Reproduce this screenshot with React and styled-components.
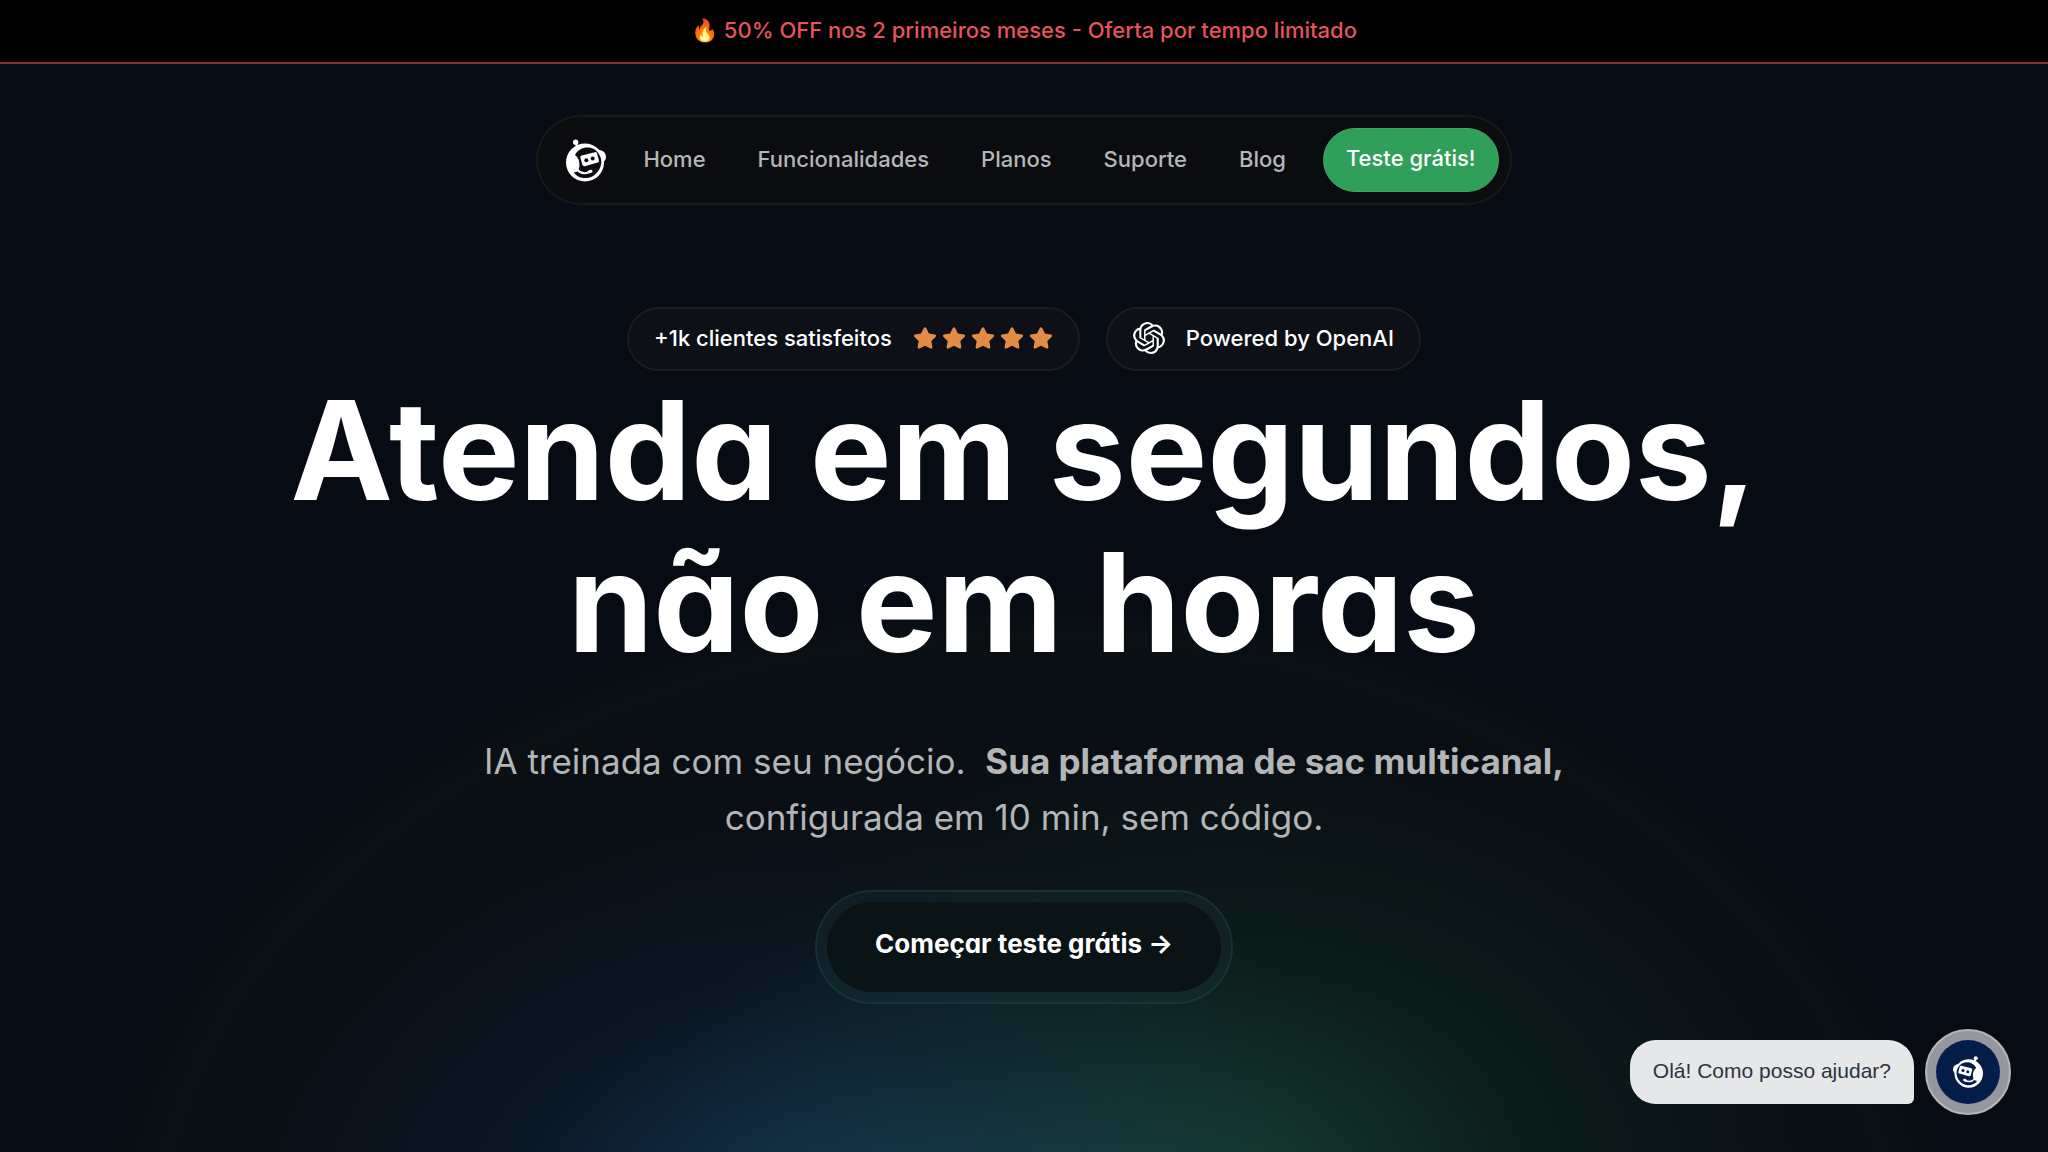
import React from "react";
import styled, { createGlobalStyle } from "styled-components";
import { FaStar } from "react-icons/fa";
import { SiOpenai } from "react-icons/si";

const GlobalStyle = createGlobalStyle`
  * {
    box-sizing: border-box;
  }
  body {
    margin: 0;
    background: #070c14;
    color: #fff;
    font-family: Inter, "Liberation Sans", sans-serif;
  }
`;

const Page = styled("div")`
  display: flex;
  flex-direction: column;
  min-height: 100vh;
  background:
    radial-gradient(ellipse 24% 26% at 50% 106%, rgba(30, 92, 100, 0.4), rgba(30, 92, 100, 0.15) 55%, transparent),
    radial-gradient(ellipse 27% 36% at 38% 107%, rgba(22, 68, 128, 0.48), rgba(20, 52, 100, 0.2) 50%, transparent),
    radial-gradient(ellipse 29% 38% at 61% 102%, rgba(28, 92, 56, 0.42), rgba(22, 70, 46, 0.2) 50%, transparent),
    radial-gradient(ellipse 45% 58% at 50% 110%, rgba(14, 24, 27, 0.7), rgba(11, 16, 20, 0.5) 88%, rgba(12, 18, 20, 0.65) 95%, transparent),
    #070c14;
`;

const Banner = styled("div")`
  display: flex;
  justify-content: center;
  padding: 16px 24px 18px;
  border-bottom: 2px solid #87303a;
  background: #000;
  color: #e5535c;
  font-size: 22px;
  font-weight: 500;
  line-height: 28px;
`;

const Nav = styled("nav")`
  display: flex;
  align-items: center;
  align-self: center;
  margin-top: 51px;
  padding: 11px 11px 11px 28px;
  border: 2px solid #15191c;
  border-radius: 45px;
  background: #0b0c0f;
`;

const LogoLink = styled("a")`
  display: flex;
  margin-right: 11px;
  color: #fff;
`;

const NavLink = styled("a")`
  padding: 0 26px 2px;
  color: #b5b6b7;
  font-size: 22px;
  font-weight: 500;
  line-height: 28px;
  text-decoration: none;
`;

const Trial = styled("a")`
  margin-left: 11px;
  padding: 15px 22px 19px;
  border: 1px solid #45a468;
  border-radius: 32px;
  background: #2f9f5a;
  color: #fff;
  font-size: 22px;
  font-weight: 500;
  line-height: 28px;
  text-decoration: none;
`;

const Hero = styled("main")`
  display: flex;
  flex-direction: column;
  align-items: center;
  padding: 102px 24px 24px;
  text-align: center;
`;

const Badges = styled("div")`
  display: flex;
  gap: 26px;
`;

const Badge = styled("div")`
  display: flex;
  align-items: center;
  gap: 21px;
  height: 64px;
  padding: 0 25px 2px;
  border: 2px solid #181d21;
  border-radius: 32px;
  background: #0d1117;
  font-size: 22px;
  font-weight: 500;
  line-height: 28px;
`;

const Stars = styled("span")`
  display: flex;
  gap: 5px;
  color: #e28c44;
`;

const Title = styled("h1")`
  margin: 0;
  padding-top: 3px;
  font-size: 137px;
  font-weight: 700;
  line-height: 152px;
  font-feature-settings: "cv11";
`;

const Lead = styled("p")`
  margin: 55px 0 0;
  color: #b3b5b7;
  font-size: 35px;
  line-height: 56px;
`;

const Start = styled("button")`
  margin-top: 45px;
  padding: 10px;
  border: 2px solid rgba(50, 90, 90, 0.25);
  border-radius: 57px;
  background: rgba(40, 80, 84, 0.15);
  color: #fff;
  cursor: pointer;
`;

const StartLabel = styled("span")`
  display: block;
  padding: 24px 48px 30px;
  border-radius: 45px;
  background: #0a1315;
  font-family: Inter, "Liberation Sans", sans-serif;
  font-size: 26px;
  font-weight: 700;
  line-height: 36px;
  font-feature-settings: "cv11";
`;

const Chat = styled("aside")`
  position: fixed;
  right: 37px;
  bottom: 37px;
  display: flex;
  align-items: center;
  gap: 11px;
`;

const Bubble = styled("div")`
  padding: 17px 23px 19px;
  border-radius: 26px 26px 6px 26px;
  background: #e6e7e8;
  color: #2b3440;
  font-family: "Liberation Sans", Arial, sans-serif;
  font-size: 21px;
  line-height: 28px;
`;

const ChatButton = styled("button")`
  display: flex;
  padding: 9px;
  border: 2px solid #b4b6b9;
  border-radius: 50%;
  background: #94989e;
  color: #fff;
  cursor: pointer;
`;

const ChatFace = styled("span")`
  display: flex;
  align-items: center;
  justify-content: center;
  width: 64px;
  height: 64px;
  border-radius: 50%;
  background: #041e49;
`;

const Robot = ({ width, height, hole, flip }) => (
  <svg width={width} height={height} viewBox="0 0 120 128" aria-hidden="true">
    <g transform={flip ? "translate(120 0) scale(-1 1)" : undefined}>
      <path d="M29 10L34 24" stroke="currentColor" strokeWidth="7" />
      <circle cx="29" cy="9" r="8" fill="currentColor" />
      <circle cx="57" cy="70" r="57" fill="currentColor" />
      <path d="M98 32Q117 34 120 51Q120 66 109 69Z" fill="currentColor" />
      <path
        d="M27 48C37 27 62 20 82 29C97 37 106 53 106 68C105 92 89 111 68 116C49 119 32 113 23 99C32 101 38 96 40 83C42 67 37 54 27 48Z"
        fill={hole}
      />
      <path
        d="M47 49L87 39Q92 38 93 43L99 64Q100 68 95 70L56 81Q51 82 49 77L43 55Q42 50 47 49Z"
        fill="currentColor"
      />
      <circle cx="61" cy="63" r="6" fill={hole} />
      <circle cx="80" cy="58" r="6" fill={hole} />
      <path
        d="M33 91Q49 109 71 98"
        fill="none"
        stroke="currentColor"
        strokeWidth="6"
        strokeLinecap="round"
      />
      <ellipse cx="72" cy="97" rx="8" ry="5" fill="currentColor" transform="rotate(-18 72 97)" />
    </g>
  </svg>
);

const links = ["Home", "Funcionalidades", "Planos", "Suporte", "Blog"];

export default function App() {
  return (
    <Page>
      <GlobalStyle />
      <Banner>🔥 50% OFF nos 2 primeiros meses - Oferta por tempo limitado</Banner>
      <Nav>
        <LogoLink href="#" aria-label="Início">
          <Robot width={40} height={43} hole="#0b0c0f" />
        </LogoLink>
        {links.map(link => (
          <NavLink key={link} href="#">
            {link}
          </NavLink>
        ))}
        <Trial href="#">Teste grátis!</Trial>
      </Nav>
      <Hero>
        <Badges>
          <Badge>
            +1k clientes satisfeitos
            <Stars>
              {[1, 2, 3, 4, 5].map(star => (
                <FaStar key={star} size={24} />
              ))}
            </Stars>
          </Badge>
          <Badge>
            <SiOpenai size={32} />
            Powered by OpenAI
          </Badge>
        </Badges>
        <Title>
          Atenda em segundos,
          <br />
          não em horas
        </Title>
        <Lead>
          IA treinada com seu negócio.&nbsp; <strong>Sua plataforma de sac multicanal,</strong>
          <br />
          configurada em 10 min, sem código.
        </Lead>
        <Start type="button">
          <StartLabel>Começar teste grátis →</StartLabel>
        </Start>
      </Hero>
      <Chat>
        <Bubble>Olá! Como posso ajudar?</Bubble>
        <ChatButton type="button" aria-label="Abrir chat">
          <ChatFace>
            <Robot width={30} height={32} hole="#041e49" flip />
          </ChatFace>
        </ChatButton>
      </Chat>
    </Page>
  );
}
